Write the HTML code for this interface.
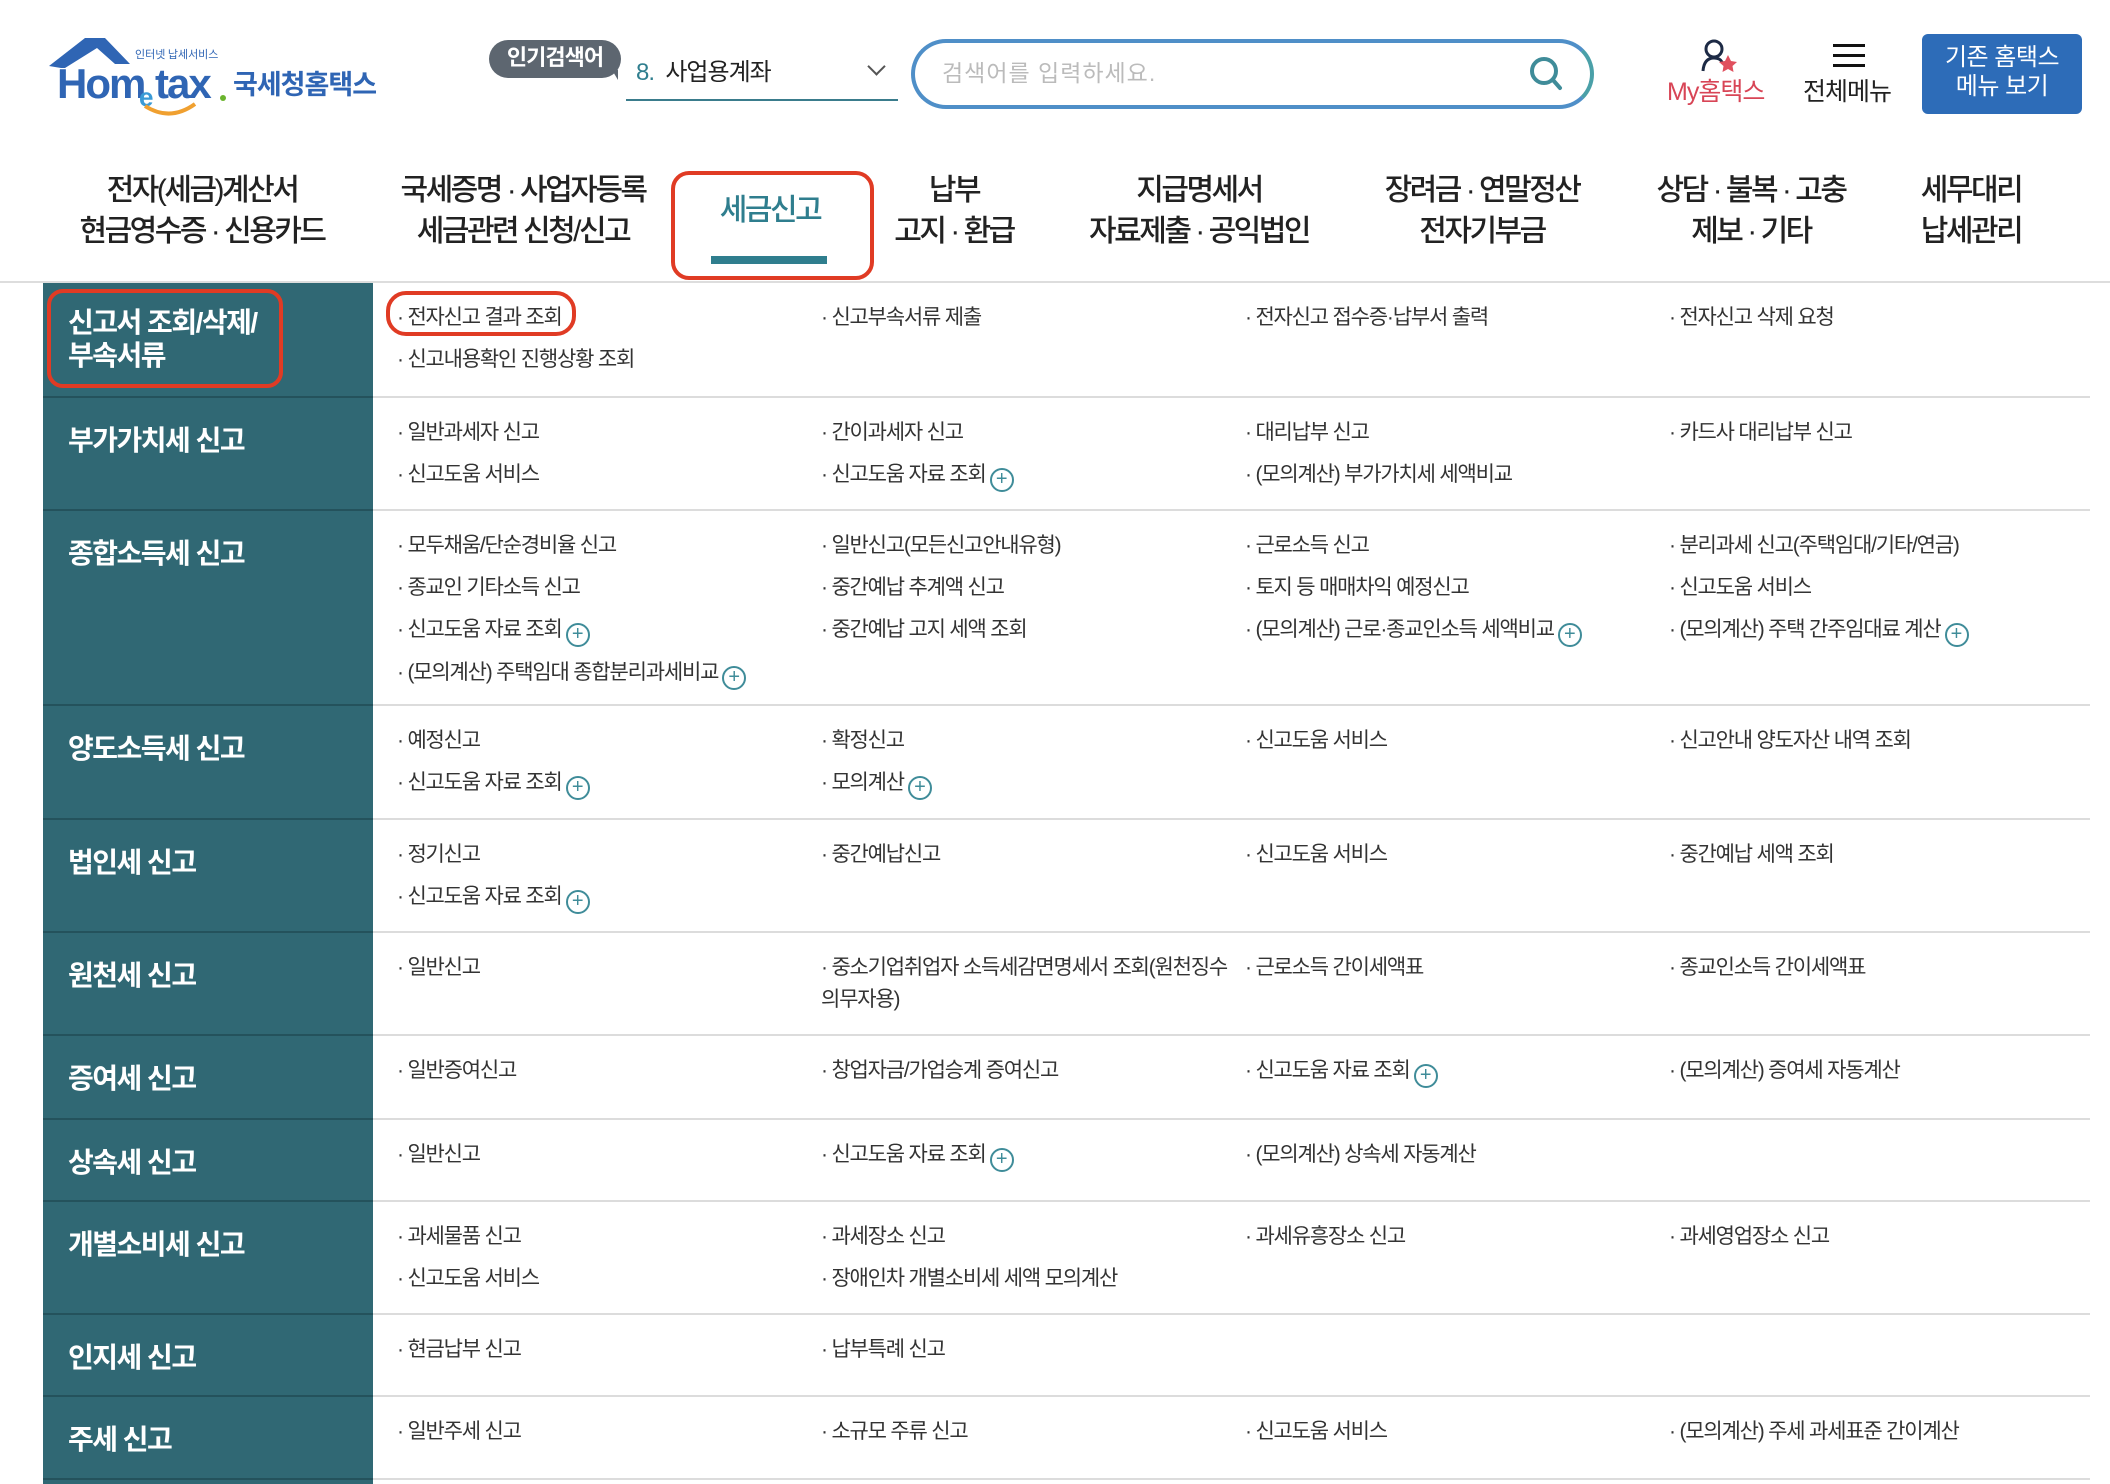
<!DOCTYPE html>
<html><head><meta charset="utf-8"><style>
*{margin:0;padding:0;box-sizing:border-box}
body{width:2110px;height:1484px;overflow:hidden;background:#fff;font-family:"Liberation Sans","Noto Sans CJK KR",sans-serif;color:#222;position:relative}
.abs{position:absolute}
.nav{position:absolute;top:170px;text-align:center;font-size:30px;font-weight:500;line-height:41px;letter-spacing:-2.5px;color:#222;transform:translateX(-50%);white-space:nowrap}
.row{position:absolute;left:43px;width:2047px;display:flex;border-bottom:2px solid #dcdcdc}
.lh{width:330px;flex:none;background:#306874;color:#fff;font-size:28px;font-weight:700;letter-spacing:-1.5px;padding:25px 0 0 25px;line-height:36px;border-bottom:2px solid #24525c;margin-bottom:-2px}
.items{flex:1;display:grid;grid-template-columns:repeat(4,424px);align-content:start;padding:14px 0 0 24px}
.it{font-size:21px;letter-spacing:-1.2px;color:#333;line-height:32px;padding:5px 30px 5px 0;white-space:nowrap}
.it::before{content:"· ";}
.p{display:inline-block;width:24px;height:24px;border:2px solid #3f8c99;border-radius:50%;color:#3f8c99;font-size:20px;line-height:19px;text-align:center;vertical-align:-4px;margin-left:4px;letter-spacing:0}
</style></head><body>
<!-- logo -->
<svg class="abs" style="left:45px;top:36px" width="340" height="82" viewBox="0 0 340 82">
<path d="M4 30 L40 2 L60 2 L85 28 L70 28 L52 12 L20 32 L16 32 Z" fill="#2f65b4"/>
<text x="90" y="22" font-size="11" fill="#2f65b4" font-family="Noto Sans CJK KR">인터넷 납세서비스</text>
<text x="12" y="62" font-size="42" font-weight="700" fill="#2f65b4" font-family="Liberation Sans" letter-spacing="-2">Hom</text>
<text x="94" y="70" font-size="26" font-weight="700" fill="#3a9ad6" font-family="Liberation Sans">e</text>
<text x="110" y="62" font-size="42" font-weight="700" fill="#2f65b4" font-family="Liberation Sans" letter-spacing="-2">tax</text>
<circle cx="178" cy="62" r="3" fill="#6ab42d"/>
<path d="M100 70 Q125 86 150 68" stroke="#f0a030" stroke-width="4" fill="none"/>
<text x="188" y="58" font-size="27" font-weight="700" fill="#2f65b4" font-family="Noto Sans CJK KR" letter-spacing="-1">국세청홈택스</text>
</svg>
<!-- popular -->
<div class="abs" style="left:489px;top:40px;width:132px;height:38px;background:#5d6670;border-radius:19px;color:#fff;font-size:22px;font-weight:700;text-align:center;line-height:36px;letter-spacing:-1px">인기검색어</div>
<div class="abs" style="left:612px;top:70px;width:0;height:0;border-left:6px solid transparent;border-top:10px solid #5d6670"></div>
<div class="abs" style="left:636px;top:52px;font-size:24px;color:#222;letter-spacing:-1px"><span style="color:#2f7e8e">8.</span>&nbsp; 사업용계좌</div>
<div class="abs" style="left:870px;top:60px;width:13px;height:13px;border-right:2px solid #555;border-bottom:2px solid #555;transform:rotate(45deg)"></div>
<div class="abs" style="left:626px;top:99px;width:272px;height:2px;background:#3a7c8c"></div>
<!-- search -->
<div class="abs" style="left:911px;top:39px;width:683px;height:70px;border:4px solid #4f8fc8;border-right-color:#4aa0a8;border-radius:35px"></div>
<div class="abs" style="left:942px;top:54px;font-size:23px;color:#bbb;letter-spacing:1px">검색어를 입력하세요.</div>
<svg class="abs" style="left:1528px;top:54px" width="36" height="40"><circle cx="16" cy="17" r="12" stroke="#3f8c99" stroke-width="4" fill="none"/><path d="M25 26 L32 34" stroke="#3f8c99" stroke-width="4" stroke-linecap="round"/></svg>
<!-- my -->
<svg class="abs" style="left:1700px;top:38px" width="40" height="36"><circle cx="14" cy="11" r="8" stroke="#1d2a45" stroke-width="3" fill="none"/><path d="M3 33 Q4 20 14 20 Q20 20 22 24" stroke="#1d2a45" stroke-width="3" fill="none"/><path d="M28 17 l3 6 6 1 -4.5 4 1 6 -5.5 -3 -5.5 3 1 -6 -4.5 -4 6 -1z" fill="#e0505e"/></svg>
<div class="abs" style="left:1667px;top:72px;font-size:25px;color:#d84556;letter-spacing:-1px">My홈택스</div>
<div class="abs" style="left:1833px;top:44px;width:32px;height:3px;background:#111;box-shadow:0 10px 0 #111,0 20px 0 #111"></div>
<div class="abs" style="left:1803px;top:72px;font-size:25px;color:#222;letter-spacing:-1px">전체메뉴</div>
<div class="abs" style="left:1922px;top:34px;width:160px;height:80px;background:#2d6cb8;border-radius:6px;color:#fff;font-size:24px;text-align:center;line-height:29px;padding-top:9px;letter-spacing:-0.5px">기존 홈택스<br>메뉴 보기</div>
<!-- nav -->
<div class="nav" style="left:202px">전자(세금)계산서<br>현금영수증 · 신용카드</div>
<div class="nav" style="left:523px">국세증명 · 사업자등록<br>세금관련 신청/신고</div>
<div class="nav" style="left:770px;top:190px;color:#2f7e8e">세금신고</div>
<div class="nav" style="left:954px">납부<br>고지 · 환급</div>
<div class="nav" style="left:1199px">지급명세서<br>자료제출 · 공익법인</div>
<div class="nav" style="left:1482px">장려금 · 연말정산<br>전자기부금</div>
<div class="nav" style="left:1751px">상담 · 불복 · 고충<br>제보 · 기타</div>
<div class="nav" style="left:1971px">세무대리<br>납세관리</div>
<div class="abs" style="left:671px;top:171px;width:203px;height:109px;border:4px solid #e03b24;border-radius:18px"></div>
<div class="abs" style="left:711px;top:256px;width:116px;height:8px;background:#2f7e8e"></div>
<div class="abs" style="left:0;top:281px;width:2110px;height:2px;background:#ddd"></div>

<div class="row" style="top:283px;height:115px"><div class="lh" style="padding-top:23px;line-height:33px">신고서 조회/삭제/<br>부속서류</div><div class="items"><div class="it">전자신고 결과 조회</div><div class="it">신고부속서류 제출</div><div class="it">전자신고 접수증·납부서 출력</div><div class="it">전자신고 삭제 요청</div><div class="it">신고내용확인 진행상황 조회</div></div></div>
<div class="row" style="top:398px;height:113px"><div class="lh">부가가치세 신고</div><div class="items"><div class="it">일반과세자 신고</div><div class="it">간이과세자 신고</div><div class="it">대리납부 신고</div><div class="it">카드사 대리납부 신고</div><div class="it">신고도움 서비스</div><div class="it">신고도움 자료 조회<span class="p">+</span></div><div class="it">(모의계산) 부가가치세 세액비교</div></div></div>
<div class="row" style="top:511px;height:195px"><div class="lh">종합소득세 신고</div><div class="items"><div class="it">모두채움/단순경비율 신고</div><div class="it">일반신고(모든신고안내유형)</div><div class="it">근로소득 신고</div><div class="it">분리과세 신고(주택임대/기타/연금)</div><div class="it">종교인 기타소득 신고</div><div class="it">중간예납 추계액 신고</div><div class="it">토지 등 매매차익 예정신고</div><div class="it">신고도움 서비스</div><div class="it">신고도움 자료 조회<span class="p">+</span></div><div class="it">중간예납 고지 세액 조회</div><div class="it">(모의계산) 근로·종교인소득 세액비교<span class="p">+</span></div><div class="it">(모의계산) 주택 간주임대료 계산<span class="p">+</span></div><div class="it">(모의계산) 주택임대 종합분리과세비교<span class="p">+</span></div></div></div>
<div class="row" style="top:706px;height:114px"><div class="lh">양도소득세 신고</div><div class="items"><div class="it">예정신고</div><div class="it">확정신고</div><div class="it">신고도움 서비스</div><div class="it">신고안내 양도자산 내역 조회</div><div class="it">신고도움 자료 조회<span class="p">+</span></div><div class="it">모의계산<span class="p">+</span></div></div></div>
<div class="row" style="top:820px;height:113px"><div class="lh">법인세 신고</div><div class="items"><div class="it">정기신고</div><div class="it">중간예납신고</div><div class="it">신고도움 서비스</div><div class="it">중간예납 세액 조회</div><div class="it">신고도움 자료 조회<span class="p">+</span></div></div></div>
<div class="row" style="top:933px;height:103px"><div class="lh">원천세 신고</div><div class="items"><div class="it">일반신고</div><div class="it" style="white-space:normal;padding-right:12px">중소기업취업자 소득세감면명세서 조회(원천징수의무자용)</div><div class="it">근로소득 간이세액표</div><div class="it">종교인소득 간이세액표</div></div></div>
<div class="row" style="top:1036px;height:84px"><div class="lh">증여세 신고</div><div class="items"><div class="it">일반증여신고</div><div class="it">창업자금/가업승계 증여신고</div><div class="it">신고도움 자료 조회<span class="p">+</span></div><div class="it">(모의계산) 증여세 자동계산</div></div></div>
<div class="row" style="top:1120px;height:82px"><div class="lh">상속세 신고</div><div class="items"><div class="it">일반신고</div><div class="it">신고도움 자료 조회<span class="p">+</span></div><div class="it">(모의계산) 상속세 자동계산</div></div></div>
<div class="row" style="top:1202px;height:113px"><div class="lh">개별소비세 신고</div><div class="items"><div class="it">과세물품 신고</div><div class="it">과세장소 신고</div><div class="it">과세유흥장소 신고</div><div class="it">과세영업장소 신고</div><div class="it">신고도움 서비스</div><div class="it">장애인차 개별소비세 세액 모의계산</div></div></div>
<div class="row" style="top:1315px;height:82px"><div class="lh">인지세 신고</div><div class="items"><div class="it">현금납부 신고</div><div class="it">납부특례 신고</div></div></div>
<div class="row" style="top:1397px;height:83px"><div class="lh">주세 신고</div><div class="items"><div class="it">일반주세 신고</div><div class="it">소규모 주류 신고</div><div class="it">신고도움 서비스</div><div class="it">(모의계산) 주세 과세표준 간이계산</div></div></div>
<div class="abs" style="left:43px;top:1480px;width:330px;height:4px;background:#306874"></div>

<div class="abs" style="left:47px;top:289px;width:236px;height:99px;border:4px solid #e03b24;border-radius:16px"></div>
<div class="abs" style="left:386px;top:291px;width:190px;height:45px;border:4px solid #e03b24;border-radius:20px"></div>
</body></html>
